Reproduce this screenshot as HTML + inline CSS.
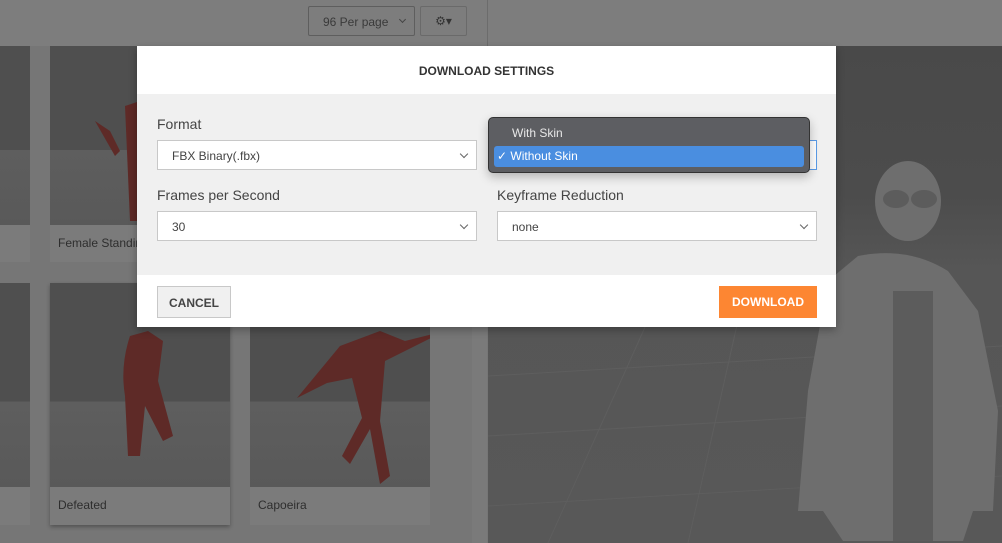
<!DOCTYPE html>
<html><head><style>
*{margin:0;padding:0;box-sizing:border-box}
body{width:1002px;height:543px;overflow:hidden;position:relative;background:#767676;font-family:"Liberation Sans",sans-serif}
.abs{position:absolute}
.card{position:absolute;background:#7b7b7b}
.card .img{position:absolute;left:0;top:0;right:0;background:linear-gradient(#4f4f4f 0,#4f4f4f 58%,#5e5e5e 58%,#595959 100%)}
.card .lbl{position:absolute;left:8px;font-size:12px;color:#2e2e2e}
.sel{position:absolute;height:30px;background:#fff;border:1px solid #c8c8c8;font-size:12px;color:#444;padding:8px 0 0 14px}
.sel:after{content:"";position:absolute;right:9px;top:10px;width:5px;height:5px;border-right:1.5px solid #666;border-bottom:1.5px solid #666;transform:rotate(45deg)}
.lab{position:absolute;font-size:14px;color:#444}
</style></head><body>
<div class="abs" style="left:0;top:0;width:1002px;height:46px;background:#7d7d7d"></div>
<div class="abs" style="left:487px;top:0;width:1px;height:46px;background:#6c6c6c"></div>
<div class="abs" style="left:308px;top:6px;width:107px;height:30px;border:1px solid #5e5e5e;border-radius:2px;font-size:12px;color:#3a3a3a;padding:8px 0 0 14px">96 Per page<span style="position:absolute;right:9px;top:10px;width:5px;height:5px;border-right:1.5px solid #444;border-bottom:1.5px solid #444;transform:rotate(45deg)"></span></div>
<div class="abs" style="left:420px;top:6px;width:47px;height:30px;border:1px solid #6a6a6a;border-radius:2px;font-size:12px;color:#333;text-align:center;padding-top:7px">⚙▾</div>
<div class="card" style="left:0;top:46px;width:30px;height:216px"><div class="img" style="height:179px"></div></div>
<div class="card" style="left:50px;top:46px;width:180px;height:216px"><div class="img" style="height:179px"></div><div class="lbl" style="top:190px">Female Standing</div></div>
<div class="card" style="left:0;top:283px;width:30px;height:242px"><div class="img" style="height:204px"></div></div>
<div class="card" style="left:50px;top:283px;width:180px;height:242px;box-shadow:0 2px 4px rgba(0,0,0,.3)"><div class="img" style="height:204px"></div><div class="lbl" style="top:215px">Defeated</div></div>
<div class="card" style="left:250px;top:283px;width:180px;height:242px"><div class="img" style="height:204px"></div><div class="lbl" style="top:215px">Capoeira</div></div>
<div class="abs" style="left:472px;top:46px;width:15px;height:497px;background:#7a7a7a"></div>
<svg class="abs" style="left:50px;top:46px" width="380" height="441">
<g fill="#5e2a27">
<path d="M75 60 l15 -5 10 20 -2 40 -8 60 -10 0 z"/><path d="M45 75 l15 10 10 20 -5 5z"/>
<path d="M80 290 q-10 30 -5 60 l3 60 12 0 5-50 18 35 10 -5 -15 -55 5 -40 -15 -10z"/>
<path d="M290 300 l40 -15 25 10 40 -10 -40 20 -20 10 -5 60 10 55 -10 8 -10 -55 -20 35 -8 -8 20 -38 -10 -40 -25 5 -30 15z"/>
</g></svg>
<div class="abs" style="left:488px;top:46px;width:514px;height:497px;background:linear-gradient(#494949 0,#4c4c4c 30%,#565656 45%,#585858 100%)"></div>
<svg class="abs" style="left:488px;top:46px" width="514" height="497">
<g stroke="#5e5e5e" stroke-width="1" fill="none">
<path d="M0 330 L514 300 M0 390 L514 360 M0 460 L514 430 M60 497 L180 230 M200 497 L260 230"/>
</g>
<g fill="#6e6e6e">
<ellipse cx="420" cy="155" rx="33" ry="40"/>
<path d="M370 210 q50 -10 90 15 l30 40 20 100 -5 100 -20 0 -10 30 -120 0 -20 -30 -25 0 10 -120 20 -110z"/>
</g>
<g fill="#5c5c5c"><path d="M405 245 l40 0 0 250 -40 0z"/><ellipse cx="408" cy="153" rx="13" ry="9"/><ellipse cx="436" cy="153" rx="13" ry="9"/></g>
</svg>
<div class="abs" style="left:137px;top:46px;width:699px;height:281px;background:#fff;box-shadow:0 3px 8px rgba(0,0,0,.3)">
<div class="abs" style="left:0;top:0;width:699px;height:48px;text-align:center;font-size:12px;font-weight:bold;color:#333;padding-top:18px">DOWNLOAD SETTINGS</div>
<div class="abs" style="left:0;top:48px;width:699px;height:181px;background:#f0f0f0">
<div class="lab" style="left:20px;top:22px">Format</div>
<div class="sel" style="left:20px;top:46px;width:320px">FBX Binary(.fbx)</div>
<div class="sel" style="left:360px;top:46px;width:320px;border-color:#5b9ce8"></div>
<div class="lab" style="left:20px;top:93px">Frames per Second</div>
<div class="sel" style="left:20px;top:117px;width:320px">30</div>
<div class="lab" style="left:360px;top:93px">Keyframe Reduction</div>
<div class="sel" style="left:360px;top:117px;width:320px">none</div>
</div>
<div class="abs" style="left:20px;top:240px;width:74px;height:32px;background:#f0f0f0;border:1px solid #c8c8c8;font-size:12px;font-weight:bold;color:#444;text-align:center;padding-top:9px">CANCEL</div>
<div class="abs" style="left:582px;top:240px;width:98px;height:32px;background:#fd8632;font-size:12px;font-weight:bold;color:#fff;text-align:center;padding-top:9px">DOWNLOAD</div>
</div>
<div class="abs" style="left:488px;top:117px;width:322px;height:56px;background:#5d5e62;border:1px solid #333;border-radius:5px;box-shadow:0 4px 10px rgba(0,0,0,.25)">
<div class="abs" style="left:23px;top:8px;font-size:12px;color:#e8e8e8">With Skin</div>
<div class="abs" style="left:5px;top:28px;width:310px;height:21px;background:#4a8ee0;border-radius:3px;font-size:12px;color:#fff;padding:3px 0 0 3px">✓ Without Skin</div>
</div>
</body></html>
